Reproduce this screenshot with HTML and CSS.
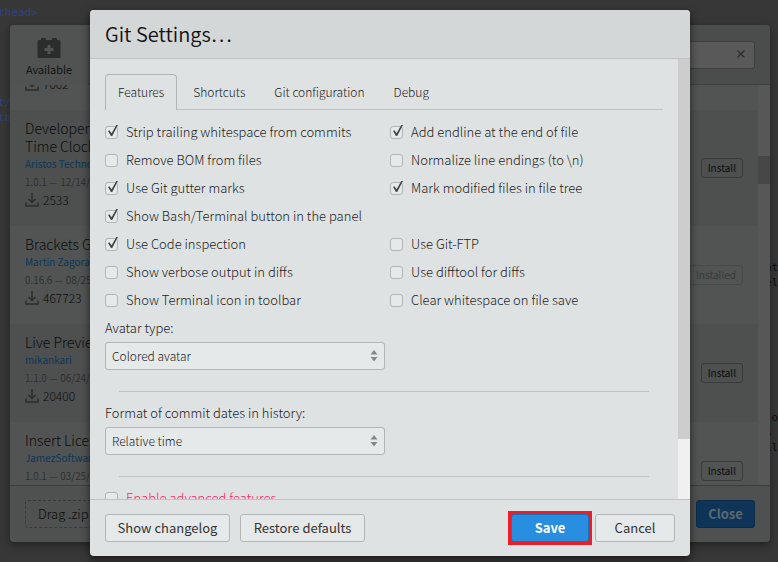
FILE: index.html
```
<!DOCTYPE html>
<html lang="en">
<head>
<meta charset="utf-8">
<title>Git Settings</title>
<link rel="stylesheet" href="styles.css">
</head>
<body>
<svg class="defs" aria-hidden="true">
  <symbol id="download" viewBox="0 0 14 14">
    <path d="M7 0v9M3.500 6L7 9.500L10.500 6M1 9.500V13H13V9.500" fill="none" stroke="currentColor" stroke-width="1.500"/>
  </symbol>
  <symbol id="arrows" viewBox="0 0 8 12">
    <path d="M4 0L7.500 4.500H.5zM4 11.500L.5 7H7.500z" fill="currentColor"/>
  </symbol>
</svg>

<div class="editor" aria-hidden="true">
  <div class="code left">
    <pre class="tag">thead&gt;</pre>
    <pre class="tag later">t/
tb</pre>
  </div>
  <div class="code right">
    <pre>nt
el</pre>
    <pre class="late"> o
s
il</pre>
  </div>
</div>

<section class="manager" aria-label="Extension Manager">
  <header class="manager-head">
    <button class="available" type="button">
      <svg width="24" height="20" viewBox="0 0 24 20"><path fill="currentColor" fill-rule="evenodd" d="M2 2H4V1q0-1 1-1H8q1 0 1 1V2H15V1q0-1 1-1H19q1 0 1 1V2H22q1.500 0 1.500 1.500V18.500q0 1.500-1.500 1.500H2Q.5 20 .5 18.500V3.500Q.5 2 2 2zM10.500 7v3H7.500v3h3v3h3v-3h3v-3h-3V7z"/></svg>
      <span>Available</span>
    </button>
    <div class="search">
      <input type="text" aria-label="Search">
      <button type="button" class="clear" aria-label="Clear"><svg width="8" height="8" viewBox="0 0 8 8"><path d="M.5.5L7.500 7.500M7.500.5L.5 7.500" stroke="currentColor" stroke-width="1.200"/></svg></button>
    </div>
  </header>
  <div class="manager-body">
    <div class="list">
      <article class="ext partial">
        <p class="count"><svg width="14" height="14"><use href="#download"/></svg>7002</p>
      </article>
      <article class="ext dark">
        <div class="info"><h3>Developer<br>Time Clock</h3><a href="#">Aristos Techno</a><p class="ver">1.0.1 — 12/14/</p><p class="count"><svg width="14" height="14"><use href="#download"/></svg>2533</p></div>
        <button type="button" class="install">Install</button>
      </article>
      <article class="ext">
        <div class="info"><h3>Brackets G</h3><a href="#">Martin Zagora</a><p class="ver">0.16.6 — 08/25</p><p class="count"><svg width="14" height="14"><use href="#download"/></svg>467723</p></div>
        <button type="button" class="install" disabled>Installed</button>
      </article>
      <article class="ext dark">
        <div class="info"><h3>Live Previe</h3><a href="#">mikankari</a><p class="ver">1.1.0 — 06/24/</p><p class="count"><svg width="14" height="14"><use href="#download"/></svg>20400</p></div>
        <button type="button" class="install">Install</button>
      </article>
      <article class="ext">
        <div class="info"><h3>Insert Lice</h3><a href="#">JamezSoftwar</a><p class="ver">1.0.1 — 03/25/</p></div>
        <button type="button" class="install">Install</button>
      </article>
    </div>
    <div class="bar"><div class="bar-thumb"></div></div>
  </div>
  <footer class="manager-foot">
    <div class="drop">Drag .zip</div>
    <button type="button" class="close">Close</button>
  </footer>
</section>

<main class="stage">
  <form class="dialog" role="dialog" aria-labelledby="title">
    <header class="head"><h1 id="title">Git Settings…</h1></header>
    <div class="body">
      <div class="content">
        <nav class="tabs">
          <a href="#" class="tab active">Features</a>
          <a href="#" class="tab">Shortcuts</a>
          <a href="#" class="tab">Git configuration</a>
          <a href="#" class="tab">Debug</a>
        </nav>
        <div class="options">
          <label class="check"><input type="checkbox" checked>Strip trailing whitespace from commits</label>
          <label class="check"><input type="checkbox" checked>Add endline at the end of file</label>
          <label class="check"><input type="checkbox">Remove BOM from files</label>
          <label class="check"><input type="checkbox">Normalize line endings (to \n)</label>
          <label class="check"><input type="checkbox" checked>Use Git gutter marks</label>
          <label class="check"><input type="checkbox" checked>Mark modified files in file tree</label>
          <label class="check wide"><input type="checkbox" checked>Show Bash/Terminal button in the panel</label>
          <label class="check"><input type="checkbox" checked>Use Code inspection</label>
          <label class="check"><input type="checkbox">Use Git-FTP</label>
          <label class="check"><input type="checkbox">Show verbose output in diffs</label>
          <label class="check"><input type="checkbox">Use difftool for diffs</label>
          <label class="check"><input type="checkbox">Show Terminal icon in toolbar</label>
          <label class="check"><input type="checkbox">Clear whitespace on file save</label>
        </div>
        <label class="caption" for="avatar">Avatar type:</label>
        <div class="select"><select id="avatar"><option>Colored avatar</option></select><svg width="8" height="12"><use href="#arrows"/></svg></div>
        <hr>
        <label class="caption" for="dates">Format of commit dates in history:</label>
        <div class="select"><select id="dates"><option>Relative time</option></select><svg width="8" height="12"><use href="#arrows"/></svg></div>
        <hr>
        <label class="check advanced"><input type="checkbox">Enable advanced features</label>
      </div>
      <div class="scroll"><div class="scroll-thumb"></div></div>
    </div>
    <footer class="foot">
      <button type="button" class="btn">Show changelog</button>
      <button type="button" class="btn">Restore defaults</button>
      <span class="highlight"><button type="button" class="btn primary">Save</button></span>
      <button type="button" class="btn cancel">Cancel</button>
    </footer>
  </form>
</main>
</body>
</html>
```
FILE: styles.css
```
* { box-sizing: border-box; }

html, body { height: 100%; margin: 0; }

body {
  position: relative;
  overflow: hidden;
  background: #373737;
  color: #1c1c1c;
  font: 300 13px/18px "Noto Sans CJK JP", "Noto Sans", sans-serif;
}

h1, h3, p, pre { margin: 0; font-weight: inherit; }
a { text-decoration: none; }
button, input, select { font: inherit; color: inherit; margin: 0; }
button { padding: 0; border: 0; background: none; white-space: nowrap; }
.defs { position: absolute; width: 0; height: 0; }

/* Code behind the dialogs */
.editor { height: 100%; display: flex; justify-content: space-between; }
.code { color: #0c0c0c; }
.code pre { font: 400 11px/15px "DejaVu Sans Mono", monospace; }
.code.left { padding-top: 5px; margin-left: -2px; }
.code.right { padding-top: 260px; width: 13px; }
.code .tag { color: #30427c; }
.code .later { margin-top: 75px; }
.code .late { margin-top: 120px; }

/* Extension manager */
.manager {
  position: absolute;
  inset: 25px 8px 20px 10px;
  display: flex;
  flex-direction: column;
  border-radius: 4px;
  overflow: hidden;
  background: #4e5150;
  color: #0c0c0c;
  box-shadow: 0 3px 9px rgba(0, 0, 0, .4);
}
.manager-head {
  display: flex;
  justify-content: space-between;
  align-items: center;
  height: 60px;
  background: #4a4d4c;
  border-bottom: 1px solid #3f4140;
}
.available {
  display: flex;
  flex-direction: column;
  align-items: center;
  gap: 2px;
  width: 78px;
  height: 60px;
  padding-top: 13px;
  background: #505352;
  font-size: 11px;
  font-weight: 350;
}
.available svg { color: #2b2c2c; }
.search { position: relative; width: 260px; margin-right: 15px; }
.search input {
  display: block;
  width: 100%;
  height: 28px;
  border: 1px solid #3e4040;
  border-radius: 3px;
  background: #595959;
}
.clear { position: absolute; right: 10px; top: 5px; line-height: 1; color: #2c2c2c; }
.manager-body { flex: 1; min-height: 0; display: flex; overflow: hidden; }
.list { flex: 1; }
.ext {
  display: flex;
  justify-content: space-between;
  align-items: center;
  min-height: 98px;
  padding: 0 15px;
  background: #515453;
}
.ext.dark { background: #4d504f; }
.ext.partial { height: 25px; min-height: 0; align-items: flex-start; }
.partial .count { margin-top: -10px; }
.info { padding: 9px 0 17px; align-self: flex-start; }
.ext h3 { font-size: 14px; }
.ext a { display: block; font-size: 10px; font-weight: 400; color: #0c365b; }
.ver { font-size: 10px; font-weight: 350; color: #2c2e2d; }
.count { display: flex; align-items: center; gap: 4px; font-size: 12px; }
.count svg { color: #2c2e2d; }
.install {
  height: 20px;
  padding: 0 6px;
  border: 1px solid #393b3a;
  border-radius: 3px;
  font-size: 10px;
  font-weight: 400;
  line-height: 18px;
}
.install:disabled { color: #393b3a; border-color: #474a49; }
.bar { width: 12px; padding-top: 71px; background: #575757; }
.bar-thumb { height: 28px; background: #474747; }
.manager-foot {
  display: flex;
  justify-content: space-between;
  align-items: center;
  height: 57px;
  padding: 0 15px;
  border-top: 1px solid #3c3e3d;
}
.drop {
  width: 180px;
  height: 28px;
  padding: 0 12px;
  border: 1px dashed #393b3a;
  border-radius: 3px;
  line-height: 26px;
}
.close {
  width: 59px;
  height: 28px;
  border: 1px solid #0b2c49;
  border-radius: 3px;
  background: #0e3557;
  color: #5b6772;
  font-weight: 700;
}

/* Git settings dialog */
.stage { position: absolute; inset: 10px 88px 6px 90px; }
.dialog {
  display: flex;
  flex-direction: column;
  height: 100%;
  border-radius: 4px;
  overflow: hidden;
  background: #dfe2e2;
  box-shadow: 0 3px 9px rgba(0, 0, 0, .6);
}
.head {
  height: 49px;
  padding: 0 15px;
  background: #d4d7d7;
  border-bottom: 1px solid #bfc3c4;
}
.head h1 { font-size: 20px; font-weight: 350; line-height: 48px; color: #111; }
.body { flex: 1; min-height: 0; display: flex; overflow: hidden; }
.content { flex: 1; padding: 15px 15px 0; }
.scroll { width: 12px; background: #f0f0f0; }
.scroll-thumb { height: 380px; background: #cdcdcd; }
.tabs {
  display: flex;
  height: 36px;
  margin-bottom: 8px;
  gap: 3px;
  border-bottom: 1px solid #bfc3c4;
}
.tab {
  height: 36px;
  padding: 0 12px;
  border: 1px solid transparent;
  border-bottom: 0;
  border-radius: 4px 4px 0 0;
  color: #1c1c1c;
  font-size: 12px;
  line-height: 34px;
}
.tab.active { border-color: #b2b5b5; background: #dfe2e2; }
.options { display: grid; grid-template-columns: 285px 1fr; }
.wide { grid-column: 1 / -1; }
.check { display: flex; align-items: center; height: 28px; gap: 8px; white-space: nowrap; }
.check input {
  position: relative;
  appearance: none;
  width: 13px;
  height: 13px;
  border: 1px solid #b2b5b5;
  border-radius: 3px;
  background: #e5e9e9;
}
.check input:checked::after {
  content: "";
  position: absolute;
  left: 2px;
  top: -2px;
  width: 10px;
  height: 12px;
  background: #454545;
  clip-path: polygon(0 55%, 13% 48%, 36% 73%, 86% 0, 100% 4%, 42% 96%, 30% 96%);
}
.caption { display: block; line-height: 28px; }
.select { position: relative; width: 280px; }
.select select {
  display: block;
  appearance: none;
  width: 100%;
  height: 28px;
  padding: 0 6px;
  border: 1px solid #b2b5b5;
  border-radius: 3px;
  background: #e5e9e9;
  font-size: 12px;
}
.select svg { position: absolute; right: 7px; top: 8px; color: #878787; pointer-events: none; }
hr { height: 1px; margin: 21px 14px 7px; border: 0; background: #bfc3c4; }
.check.advanced { color: #f71f6e; }
.foot {
  display: flex;
  align-items: center;
  gap: 10px;
  height: 57px;
  padding: 0 15px;
  border-top: 1px solid #bfc3c4;
}
.btn {
  width: 125px;
  height: 28px;
  border: 1px solid #b2b5b5;
  border-radius: 3px;
  background: #e5e9e9;
  color: #333;
  font-weight: 400;
}
.highlight { margin-left: auto; margin-right: -7px; border: 3px solid #ee1c25; background: #ee1c25; }
.btn.primary { display: block; width: 78px; border-color: #1474bf; background: #288edf; color: #fff; font-weight: 700; }
.btn.cancel { width: 80px; }
```
